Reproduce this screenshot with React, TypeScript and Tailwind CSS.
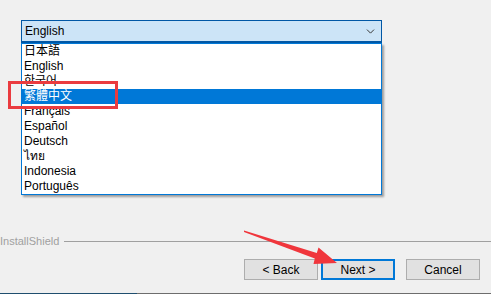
import { ChevronDown } from "lucide-react";

const LANGS = [
  "日本語",
  "English",
  "한국어",
  "繁體中文",
  "Français",
  "Español",
  "Deutsch",
  "ไทย",
  "Indonesia",
  "Português",
];

const SELECTED = "繁體中文";

function LangList() {
  return (
    <div className="absolute left-0 top-[23px] w-[361px] border border-[#0078d7] bg-white shadow-[2px_2px_2px_rgba(0,0,0,0.35)]">
      {LANGS.map((l) => (
        <div
          key={l}
          className={`h-[15px] pl-[2px] leading-[15px] ${
            l === SELECTED ? "bg-[#0078d7] text-white" : "text-black"
          }`}
        >
          {l}
        </div>
      ))}
    </div>
  );
}

function Button({ label, focused }: { label: string; focused?: boolean }) {
  return (
    <div
      className={`flex h-[21px] w-[74px] items-center justify-center bg-[#e1e1e1] text-black ${
        focused ? "border-2 border-[#0078d7]" : "border border-[#adadad]"
      }`}
    >
      {label}
    </div>
  );
}

export default function App() {
  return (
    <div
      className="relative flex h-[294px] w-[491px] flex-col overflow-hidden bg-[#f0f0f0] text-[12px]"
      style={{ fontFamily: '"Liberation Sans", "Noto Sans CJK TC", "Noto Sans", sans-serif' }}
    >
      {/* language combo */}
      <div className="relative ml-[21px] mt-[20px] w-[361px]">
        <div className="flex h-[23px] items-center justify-between border border-b-2 border-[#0057a5] bg-[#cce4f7] pl-[3px] pr-[4px]">
          <span>English</span>
          <ChevronDown size={13} strokeWidth={1.8} className="text-[#333]" />
        </div>
        <LangList />
      </div>

      <div className="mt-auto flex h-[14px] items-center gap-[5px]">
        <span className="text-[11px] leading-[14px] text-[#a0a0a0]">InstallShield</span>
        <div className="h-px flex-1 bg-[#a0a0a0]" />
      </div>

      <div className="mb-[13px] mt-[11px] flex justify-end pr-[11px]">
        <div className="flex gap-[3px]">
          <Button label="< Back" />
          <Button label="Next >" focused />
        </div>
        <div className="ml-[11px]">
          <Button label="Cancel" />
        </div>
      </div>

      <div className="flex h-px">
        <div className="w-[137px] bg-[#1f4e6e]" />
        <div className="flex-1 bg-[#6d6d6d]" />
      </div>

      {/* annotations */}
      <div className="absolute left-[8px] top-[81px] h-[28px] w-[110px] border-[3px] border-[#ea3b3f]" />
      <svg
        className="pointer-events-none absolute left-0 top-0"
        width="491"
        height="294"
        viewBox="0 0 491 294"
      >
        <polygon
          points="244,230.5 316.8,252.9 318.5,247.5 337,263 313.5,264 314.8,258.5 244,232"
          fill="#f0363c"
        />
      </svg>
    </div>
  );
}
